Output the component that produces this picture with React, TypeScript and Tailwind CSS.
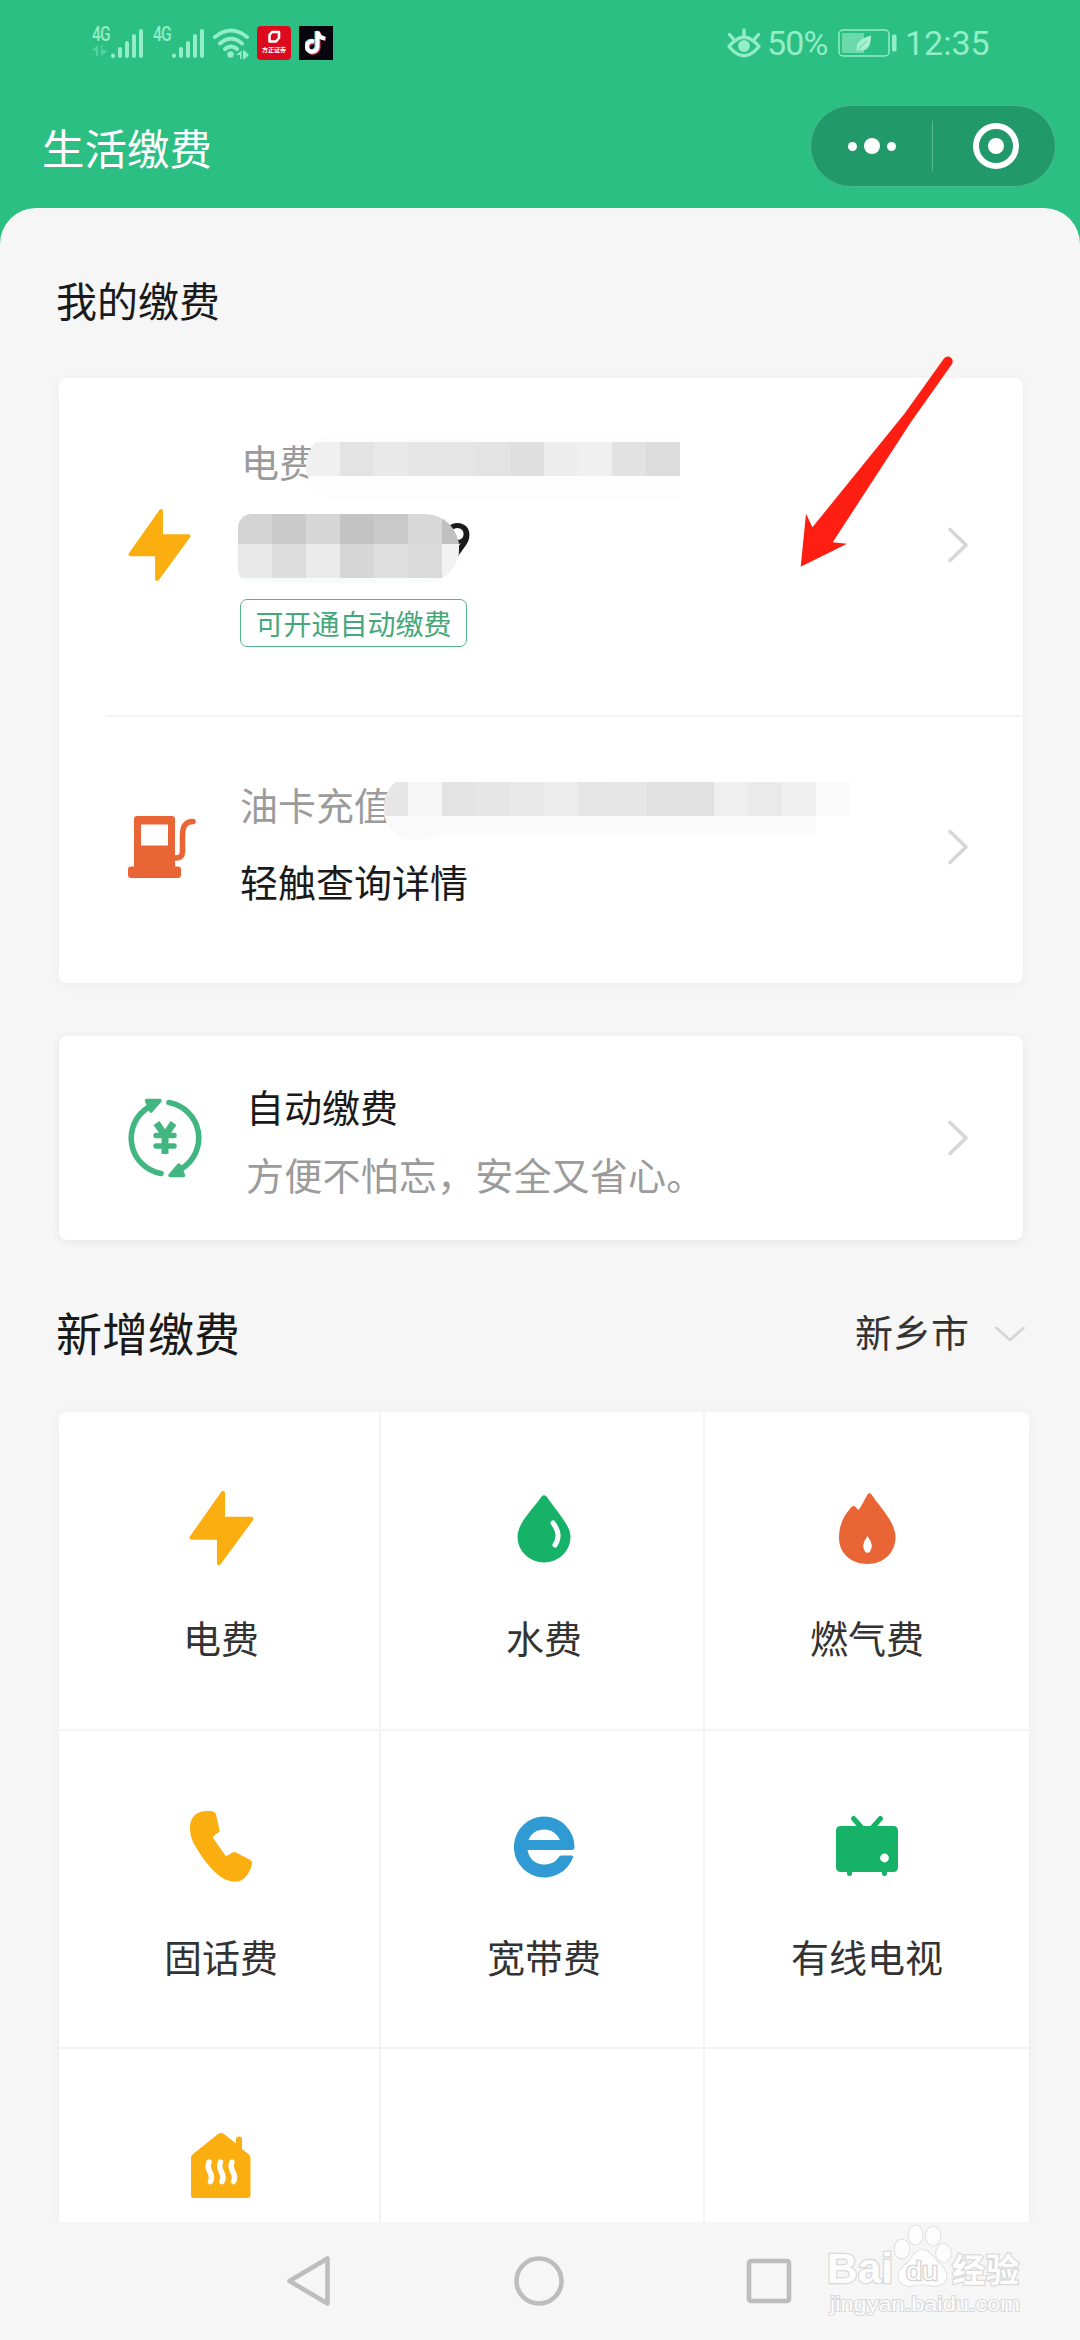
import type { ReactNode } from "react";

const BoltIcon = ({ className }: { className?: string }) => (
  <svg viewBox="0 0 64 74" className={className} fill="#fbae10" stroke="#fbae10" strokeWidth="4" strokeLinejoin="round">
    <path d="M33.5 2.5 V28 H61.5 L29.5 71.5 V46.5 H2.5 Z" />
  </svg>
);

const FuelIcon = () => (
  <svg viewBox="0 0 68 62" className="w-[68px] h-[62px]">
    <path
      fill="#e96536"
      fillRule="evenodd"
      d="M9 0 H44 Q47 0 47 3 V50.5 H50 Q53 50.5 53 53.5 V59 Q53 62 50 62 H3 Q0 62 0 59 V53.5 Q0 50.5 3 50.5 H6 V3 Q6 0 9 0 Z M13 8.5 V29.5 H40 V8.5 Z"
    />
    <path d="M47 42 C54 42 54.5 39 54.5 34 V20 C54.5 11 57 5.5 65 5.5" fill="none" stroke="#e96536" strokeWidth="5.6" strokeLinecap="round" />
  </svg>
);

const AutoPayIcon = () => (
  <svg viewBox="0 0 80 80" className="w-[80px] h-[80px]" fill="none" stroke="#42b680" strokeWidth="5.6" strokeLinecap="round">
    <path d="M44 4.5 A36 36 0 0 1 56 71" />
    <path d="M36 75.5 A36 36 0 0 1 24 9" />
    <path d="M21.5 2.5 H35 L26 13 Z" fill="#42b680" strokeWidth="3.5" strokeLinejoin="round" />
    <path d="M58.500 77.5 H45 L54 67 Z" fill="#42b680" strokeWidth="3.5" strokeLinejoin="round" />
    <path d="M31.5 25 L40 37.5 L48.5 25 M40 38 V56" strokeWidth="7" strokeLinecap="butt" />
    <path d="M31 37.5 H49 M31 48 H49" strokeWidth="5.5" />
  </svg>
);

const WaterIcon = () => (
  <svg viewBox="0 0 80 80" className="w-20 h-20">
    <path d="M37.5 8.5 Q40 6 42.5 8.5 C49 18 56 26 61 34 C64 39 66.5 43 66.5 49 A26.5 25.5 0 0 1 13.5 49 C13.5 43 16 38 19 33 C24 25 31 18 37.5 8.5 Z" fill="#16b268" />
    <path d="M49 35 Q58 47 51 57" fill="none" stroke="#fff" strokeWidth="5" strokeLinecap="round" />
  </svg>
);

const FlameIcon = () => (
  <svg viewBox="0 0 80 80" className="w-20 h-20">
    <path
      fill="#e96536"
      d="M40.5 6.5 Q42.5 4 44.5 6.5 C51 16 56 21 62 30.5 C66 37 68.5 43 68.5 49.5 C68.5 65 56 76 40.5 76 C24 76 12 65 12 50 C12 38 16 28 24.5 19 Q27 17 29 19.5 L31.5 22 C35 17.5 37 12.5 40.5 6.5 Z"
    />
    <path d="M40.5 48 Q47.5 57.5 43 63.500 Q40.5 66 38 63.500 Q33.5 57.5 40.5 48 Z" fill="#fff" />
  </svg>
);

const PhoneIcon = () => (
  <svg viewBox="0 0 80 80" className="w-20 h-20">
    <path
      fill="#fbae10"
      d="M13 9 C18 4 26 3.5 32 4.5 Q34.5 5 35 7.5 L38.5 23 Q39 24.5 37.5 25.5 L32.5 29 Q31.5 30 32.5 31.5 L44 48 Q45 49.5 46.5 48.5 L51.5 45.5 Q53 44.5 55 45.5 L69.5 53 Q71.5 54 71 56.5 C70 63 66 70 61 73 C52 77 43 73 36 67 C26 58 18 46 12.5 36 C8 26 7.5 15 13 9 Z"
    />
  </svg>
);

const BroadbandIcon = () => (
  <svg viewBox="0 0 80 80" className="w-20 h-20">
    <path
      fill="#2f9ad4"
      fillRule="evenodd"
      d="M40 9.5 A30.5 30.5 0 1 0 69 50.5 Q69.5 48.5 67.5 48.5 H57.5 Q55.5 48.5 54.5 50.5 C51 55.5 46 57.5 40 57.5 C31.5 57.5 25 52 23.5 43 H68 Q70.5 43 70.5 40 A30.5 30.5 0 0 0 40 9.5 Z M24.5 33 C27 26.5 33 22.5 40 22.5 C47 22.5 53 26.5 56 33 Z"
    />
  </svg>
);

const TvIcon = () => (
  <svg viewBox="0 0 80 80" className="w-20 h-20">
    <rect x="9" y="19" width="62" height="46" rx="4.5" fill="#16b268" />
    <path d="M26.5 11.5 L35 21 M53.5 11.5 L45 21 M22.5 63 V66.5 M57.5 63 V66.5" stroke="#16b268" strokeWidth="5" strokeLinecap="round" />
    <circle cx="57.5" cy="51" r="4.4" fill="#fff" />
  </svg>
);

const HeatingIcon = () => (
  <svg viewBox="0 0 80 80" className="w-20 h-20">
    <path
      fill="#fbae10"
      d="M37 9 Q40 7 43 9 L55 18.5 V14.5 Q55 11.5 58 11.5 Q61 11.5 61 14.5 V24 L68 29.5 Q69.5 31 69.5 33 V70 Q69.5 73 66.5 73 H13 Q10 73 10 70 V33 Q10 31 11.5 29.5 Z"
    />
    <g fill="none" stroke="#fff" strokeWidth="5.5" strokeLinecap="round">
      <path d="M28 37 C24 46 34 48 29.5 56.5" />
      <path d="M39.5 37 C35.5 46 45.5 48 41 56.5" />
      <path d="M51 37 C47 46 57 48 52.5 56.5" />
    </g>
  </svg>
);

const Chevron = ({ className = "" }: { className?: string }) => (
  <svg
    viewBox="0 0 24 40"
    className={`w-[24px] h-[40px] mr-[53px] shrink-0 ${className}`}
    fill="none"
    stroke="#d6d6d6"
    strokeWidth="3.6"
    strokeLinecap="round"
    strokeLinejoin="round"
  >
    <path d="M4 4.5 L20 20 L4 35.5" />
  </svg>
);

const SignalIcon = () => (
  <svg viewBox="0 0 34 32" className="w-[34px] h-[32px]" stroke="#93edc6" strokeWidth="4" strokeLinecap="round">
    <path d="M3 29 V28.5 M10 29 V22 M17 29 V16 M24 29 V9 M31 29 V4" />
  </svg>
);

type Tile = { label: string; icon: ReactNode; pad: string };

const tiles: Tile[] = [
  { label: "电费", icon: <BoltIcon className="w-[65px] h-20" />, pad: "pl-1" },
  { label: "水费", icon: <WaterIcon />, pad: "pl-1" },
  { label: "燃气费", icon: <FlameIcon />, pad: "" },
  { label: "固话费", icon: <PhoneIcon />, pad: "pl-1" },
  { label: "宽带费", icon: <BroadbandIcon />, pad: "pl-1" },
  { label: "有线电视", icon: <TvIcon />, pad: "" },
  { label: "", icon: <HeatingIcon />, pad: "pl-1" },
  { label: "", icon: null, pad: "" },
  { label: "", icon: null, pad: "" },
];

// masked account details
const powerName = ["#f0f0f0", "#e3e3e3", "#e9e9e9", "#e5e5e5", "#e5e5e5", "#e3e3e3", "#dfdfdf", "#ededed", "#f0f0f0", "#e2e2e2", "#dcdcdc"];
const powerAmountTop = ["#d4d4d4", "#cacaca", "#d6d6d6", "#c3c3c3", "#c9c9c9", "#d8d8d8", "#c0c0c0"];
const powerAmountBottom = ["#e8e8e8", "#dddddd", "#ebebeb", "#d6d6d6", "#dfdfdf", "#dadada", "#f2f2f2"];
const fuelName = ["#f6f6f6", "#e3e3e3", "#e6e6e6", "#e9e9e9", "#ececec", "#e5e5e5", "#e6e6e6", "#e2e2e2", "#e1e1e1", "#efefef", "#eaeaea", "#f0f0f0", "#fbfbfb"];

function Mosaic({ colors, height }: { colors: string[]; height: string }) {
  return (
    <div className={`flex ${height}`}>
      {colors.map((color, i) => (
        <div key={i} className="w-[34px] h-full shrink-0" style={{ backgroundColor: color }} />
      ))}
    </div>
  );
}

function StatusBar() {
  return (
    <div className="h-[86px] flex items-center pl-[92px] pr-[92px] text-[#93edc6]">
      <div className="flex flex-col w-[18px] h-[32px] -mt-[2px]">
        <span className="font-[Roboto] font-medium text-[20px] leading-[16px] tracking-[-1px] scale-x-[0.78] origin-left">4G</span>
        <svg viewBox="0 0 16 12" className="w-4 h-3 mt-[3px] opacity-40" fill="#93edc6">
          <path d="M0 5 L6 0 V11 H4 V6 Z M9 0 L10.5 0 V5 L16 6 L9 11 Z" />
        </svg>
      </div>
      <SignalIcon />
      <div className="w-[18px] h-[32px] ml-[9px] -mt-[2px]">
        <span className="block font-[Roboto] font-medium text-[20px] leading-[16px] tracking-[-1px] scale-x-[0.78] origin-left">4G</span>
      </div>
      <SignalIcon />
      <svg viewBox="0 0 38 32" className="w-[38px] h-[32px] ml-[7px]" fill="none" stroke="#93edc6" strokeWidth="4" strokeLinecap="round">
        <path d="M3 10 Q19 -3 35 10 M8 16.5 Q19 7 30 16.5 M13 22 Q19 17 25 22" />
        <circle cx="18.5" cy="27.5" r="3.2" fill="#93edc6" stroke="none" />
        <path d="M24 28 L29.5 23.5 V32 H28 V28 Z M31 23.5 H32.5 L37 28 L32.5 32 H31 Z" fill="#93edc6" stroke="none" />
      </svg>
      <div className="w-[34px] h-[34px] ml-[7px] rounded-[4px] bg-[#dc0a1c] flex flex-col items-center">
        <svg viewBox="0 0 14 14" className="w-[14px] h-[14px] mt-[4px]" fill="none" stroke="#fff" strokeWidth="2.6" strokeLinejoin="round">
          <path d="M5 2 H12 V8 L9 11.5 H2.5 V5 Z" />
        </svg>
        <span className="mt-px text-[6px] leading-[10px] font-bold text-white whitespace-nowrap">方正证券</span>
      </div>
      <div className="w-[34px] h-[34px] ml-[8px] bg-[#07060f] flex items-center justify-center">
        <svg viewBox="0 0 22 26" className="w-[22px] h-[26px]" fill="none" strokeWidth="4">
          <path d="M10 12.5 A5.3 5.3 0 1 0 13.5 18 V2 Q14.5 8 21 9" stroke="#ef3a5a" />
          <path d="M8 11 A5.3 5.3 0 1 0 11.5 16.5 V1 Q12.5 7 18.5 8" stroke="#4de3e4" />
          <path d="M9 11.5 A5.3 5.3 0 1 0 12.5 17 V1.5 Q13.5 7.5 20 8.5" stroke="#fff" />
        </svg>
      </div>

      <svg viewBox="0 0 34 30" className="w-[34px] h-[30px] ml-auto -mt-px" fill="none" stroke="#93edc6" strokeWidth="3.4" strokeLinecap="round">
        <path d="M2 18.5 Q17 0 32 18.5 Q17 37 2 18.5 Z" strokeLinejoin="round" />
        <circle cx="17" cy="18" r="6" fill="#93edc6" stroke="none" />
        <path d="M17 2 V8 M2.5 6.5 L6 10.5 M31.5 6.5 L28 10.5" />
      </svg>
      <span className="w-[62px] ml-[6px] font-[Roboto] text-[34px] leading-[34px] tracking-[-0.8px]">50%</span>
      <svg viewBox="0 0 60 28" className="w-[60px] h-[28px] ml-[9px]">
        <rect x="1" y="1" width="50" height="26" rx="4" fill="none" stroke="#93edc6" strokeWidth="1.5" />
        <rect x="4" y="4" width="22" height="20" fill="#6bd9a9" />
        <path d="M19 23 C17 13 24 9 33 6.5 C33 16 30 22.500 22 21.500 Z" fill="#a9f0d2" />
        <path d="M19.500 22.500 Q23 15.500 29 12" fill="none" stroke="#5fd0a0" strokeWidth="1" />
        <rect x="54" y="5.5" width="4.5" height="17" rx="1.5" fill="#93edc6" />
      </svg>
      <span className="w-[83px] ml-[7px] font-[Roboto] text-[34px] leading-[34px] whitespace-nowrap">12:35</span>
    </div>
  );
}

function TitleBar() {
  return (
    <div className="h-[122px] flex items-center justify-between pl-[42px] pr-[24px]">
      <h1 className="text-[42.5px] leading-[60px] text-white -mt-px">生活缴费</h1>
      <div className="w-[246px] h-[82px] -mt-[2px] rounded-full bg-[#22996a] border border-[#4fb78c] flex items-center">
        <div className="w-[121px] flex items-center justify-center gap-[7px]">
          <span className="w-[9px] h-[9px] rounded-full bg-white" />
          <span className="w-[16px] h-[16px] rounded-full bg-white" />
          <span className="w-[9px] h-[9px] rounded-full bg-white" />
        </div>
        <div className="w-px h-[50px] bg-[#55bb91]" />
        <div className="ml-[40px] w-[46px] h-[46px] rounded-full border-[6.5px] border-white flex items-center justify-center">
          <span className="w-[16px] h-[16px] rounded-full bg-white" />
        </div>
      </div>
    </div>
  );
}

function MyBills() {
  return (
    <section className="ml-[3px] w-[964px] h-[605px] bg-white rounded-lg shadow-[0_2px_14px_rgba(0,0,0,0.045)]">
      <div className="h-[337px] flex items-center">
        <BoltIcon className="w-[63px] h-[74px] ml-[69px] -mt-[4px]" />
        <div className="ml-[49px] pt-[59px] self-start flex-1">
          <div className="relative h-[48px] pl-[1px] text-[38px] leading-[48px] text-[#9b9b9b]">
            电费
            <div className="absolute left-[66px] -top-[5px] pt-[10px] h-[68px] rounded-l-[34px] overflow-hidden bg-[#fdfdfd]">
              <Mosaic colors={powerName} height="h-[34px]" />
            </div>
          </div>
          <div className="relative mt-[29px] h-[69px]">
            <span className="absolute left-[203px] -top-[1px] font-[Lato] font-bold text-[50px] leading-[54px] text-[#1a1a1a]">9</span>
            <div className="relative -ml-[2px] w-[221px] h-[69px] bg-[#f7fcfb] rounded-l-[14px] rounded-r-[34px] overflow-hidden">
              <Mosaic colors={powerAmountTop} height="h-[30px]" />
              <Mosaic colors={powerAmountBottom} height="h-[34px]" />
            </div>
          </div>
          <div className="mt-[16px] w-[227px] h-[48px] border-[1.5px] border-[#52b58c] rounded-[7px] text-center text-[28px] leading-[46px] text-[#45a87b]">
            可开通自动缴费
          </div>
        </div>
        <Chevron className="-mt-[3px]" />
      </div>
      <div className="ml-[46px] h-[2px] bg-[#f3f3f3]" />
      <div className="h-[262px] flex items-center">
        <div className="ml-[69px] -mt-[2px] w-[68px]">
          <FuelIcon />
        </div>
        <div className="ml-[44px] pt-[63px] self-start flex-1 text-[38px] leading-[48px]">
          <div className="relative text-[#9b9b9b]">
            油卡充值
            <div className="absolute left-[144px] top-[2px] w-[66px] h-[58px] rounded-[29px] bg-[#fafafa]" />
            <div className="absolute left-[144px] -top-[4px] pt-[6px] w-[466px] h-[59px] rounded-l-[32px] overflow-hidden">
              <div className="flex h-[34px]">
                <div className="w-[24px] bg-[#e6e6e6]" />
                <Mosaic colors={fuelName} height="h-[34px]" />
              </div>
              <div className="w-[432px] h-[19px] bg-[#fafafa]" />
            </div>
          </div>
          <div className="mt-[29px] text-[#1a1a1a]">轻触查询详情</div>
        </div>
        <Chevron className="-mt-[2px]" />
      </div>
    </section>
  );
}

function AutoPay() {
  return (
    <section className="ml-[3px] mt-[53px] w-[964px] h-[204px] flex items-center bg-white rounded-lg shadow-[0_2px_10px_rgba(0,0,0,0.07)]">
      <div className="ml-[66px]">
        <AutoPayIcon />
      </div>
      <div className="ml-[41px] pt-[46px] self-start flex-1 text-[38px] leading-[48px]">
        <div className="text-[#1a1a1a]">自动缴费</div>
        <div className="mt-[20px] text-[#9b9b9b] tracking-[0.2px]">方便不怕忘，安全又省心。</div>
      </div>
      <Chevron />
    </section>
  );
}

function TileGrid() {
  return (
    <section className="ml-[3px] w-[970px] h-[830px] grid grid-cols-[320px_322px_324px] grid-rows-[317px_316px_193px] gap-[2px] bg-[#f3f3f3] rounded-t-lg overflow-hidden shadow-[0_2px_14px_rgba(0,0,0,0.045)]">
      {tiles.map((tile, i) => (
        <div key={i} className={`bg-white pt-[76px] flex flex-col items-center ${tile.pad}`}>
          {tile.icon}
          {tile.label && <span className="mt-[45px] text-[38px] leading-[48px] text-[#333]">{tile.label}</span>}
        </div>
      ))}
    </section>
  );
}

function Watermark() {
  return (
    <div className="absolute left-[828px] top-[2222px] w-[196px] h-[100px]">
      <svg viewBox="0 0 196 100" className="w-full h-full" fill="#fdfdfd" stroke="#d9d9d9" strokeWidth="1.5" paintOrder="stroke">
        <text x="-1" y="61" fontFamily="Liberation Sans" fontWeight="bold" fontSize="42" strokeWidth="2.5" textLength="66" lengthAdjust="spacingAndGlyphs">Bai</text>
        <ellipse cx="74" cy="27" rx="7.5" ry="9.5" />
        <ellipse cx="87.5" cy="13" rx="7.2" ry="9.7" />
        <ellipse cx="105" cy="14" rx="7.4" ry="9.2" />
        <ellipse cx="115.5" cy="31" rx="7.5" ry="9.2" />
        <path d="M94 28 C101 28 104 34 109 39 C115 45 119 49 118.5 55 C118 62 111 65 104 63.5 C97 62 91 62 86 63.5 C77 65.5 70 62 70.5 53 C71 47 77 44 81 39 C85 34 88 28 94 28 Z" />
        <text x="78" y="58" fontFamily="Liberation Sans" fontSize="26" strokeWidth="2.5" stroke="#d4d4d4" textLength="32" lengthAdjust="spacingAndGlyphs">du</text>
        <text x="124" y="59.5" fontFamily="Noto Sans CJK SC" fontWeight="bold" fontSize="33" strokeWidth="2.5" textLength="67">经验</text>
        <text x="2" y="89" fontFamily="Liberation Sans" fontSize="20" strokeWidth="2" textLength="190" lengthAdjust="spacingAndGlyphs">jingyan.baidu.com</text>
      </svg>
    </div>
  );
}

export default function App() {
  return (
    <div className="relative w-[1080px] h-[2340px] overflow-hidden flex flex-col bg-[#2bbf84] font-['Noto_Sans_CJK_SC',sans-serif]">
      <StatusBar />
      <TitleBar />
      <main className="h-[2014px] px-[56px] rounded-t-[36px] bg-[#f6f6f6] overflow-hidden">
        <h2 className="h-[170px] pt-[12px] flex items-center text-[41px] leading-[60px] text-[#1a1a1a]">我的缴费</h2>
        <MyBills />
        <AutoPay />
        <div className="h-[172px] pt-[9px] flex items-center justify-between">
          <h2 className="text-[46px] leading-[60px] text-[#1a1a1a]">新增缴费</h2>
          <div className="flex items-center text-[38px] leading-[60px] text-[#333]">
            新乡市
            <svg viewBox="0 0 32 18" className="w-[32px] h-[18px] ml-[25px] mt-[6px] -mr-[2px]" fill="none" stroke="#d6d6d6" strokeWidth="3" strokeLinecap="round" strokeLinejoin="round">
              <path d="M2.5 3 L16 15 L29.5 3" />
            </svg>
          </div>
        </div>
        <TileGrid />
      </main>
      <nav className="relative h-[118px] bg-[#f6f6f6] flex items-center justify-between pl-[280px] pr-[283px]">
        <svg viewBox="0 0 56 56" className="w-14 h-14" fill="none" stroke="#bdbdbd" strokeWidth="4.6" strokeLinejoin="round">
          <path d="M47.5 5.5 V50.5 L9.5 28 Z" />
        </svg>
        <svg viewBox="0 0 56 56" className="w-14 h-14" fill="none" stroke="#bdbdbd" strokeWidth="4.6">
          <circle cx="28" cy="28" r="22.5" />
        </svg>
        <svg viewBox="0 0 56 56" className="w-14 h-14" fill="none" stroke="#bdbdbd" strokeWidth="4.6">
          <rect x="8" y="8" width="40" height="40" rx="2" />
        </svg>
      </nav>
      <Watermark />
      <svg viewBox="0 0 160 220" className="absolute left-[796px] top-[350px] w-[160px] h-[220px]" fill="#ff1e12">
        <path d="M4.7 216.7 L10 163.7 L16.4 177.3 L109 63 L147.6 9 A4.6 4.6 0 0 1 156 14 L115 72 L36.7 192.3 L51 193.7 Z" />
      </svg>
    </div>
  );
}
